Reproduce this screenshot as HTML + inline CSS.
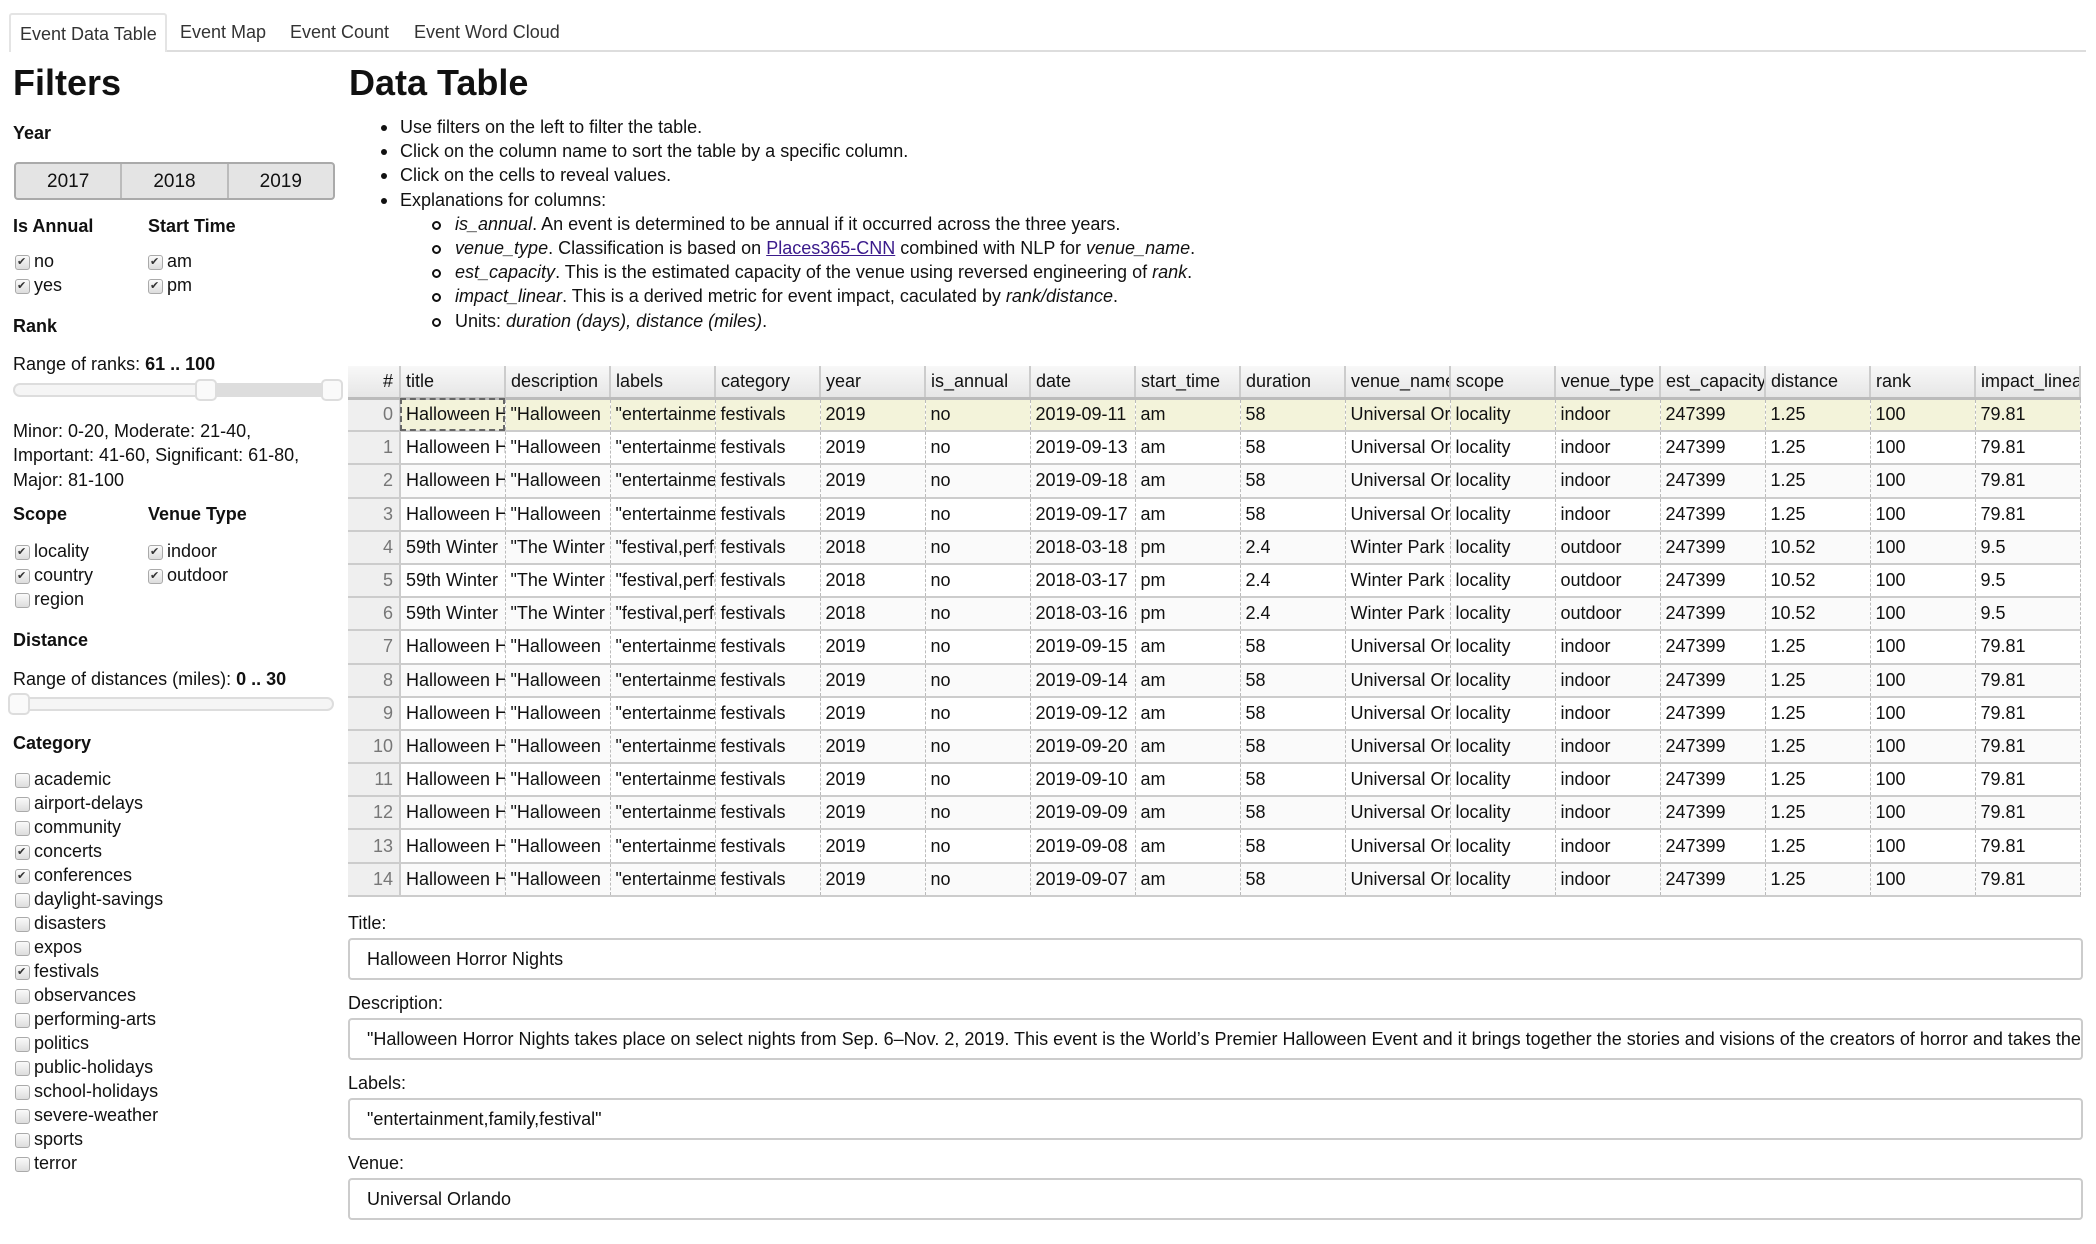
<!DOCTYPE html>
<html><head><meta charset="utf-8"><style>
*{box-sizing:border-box;margin:0;padding:0}
body{width:2096px;height:1244px;background:#fff;font-family:"Liberation Sans",sans-serif;color:#111;position:relative;overflow:hidden;font-size:18px}
.a{position:absolute;white-space:nowrap}
.tabline{position:absolute;left:9px;top:50px;width:2077px;height:2px;background:#ddd}
.tab{position:absolute;top:13px;height:38px;line-height:38px;font-size:18px;color:#333}
.act{left:9px;width:158px;border:2px solid #e4e4e4;border-bottom:none;border-radius:3px 3px 0 0;background:#fff;padding-left:9px;height:39px}
h1{position:absolute;font-size:36px;font-weight:bold;line-height:40px}
.b{font-weight:bold;font-size:18px}
.btns{position:absolute;left:14px;top:162px;width:321px;height:38px;border:2px solid #aaa;border-radius:4px;display:flex;background:#e4e4e4}
.btns div{flex:1;text-align:center;line-height:36px;font-size:19px;border-right:2px solid #bbb}
.btns div:last-child{border-right:none}
.cb{position:absolute;font-size:18px;line-height:22px;white-space:nowrap;padding-left:19px}
.cb:before{content:"";position:absolute;left:0;top:5px;width:13px;height:13px;border:1px solid #aaa;border-radius:3px;background:linear-gradient(#fafafa,#ddd)}
.cb.c:after{content:"✔";position:absolute;left:2px;top:1px;font-size:11px;color:#333}
.track{position:absolute;height:14px;border:2px solid #ddd;border-radius:7px;background:#f5f5f5}
.hnd{position:absolute;width:22px;height:22px;border:2px solid #ddd;border-radius:5px;background:#fafafa}
ul{position:absolute;left:381px;top:115px;list-style:none;font-size:18px;line-height:24.2px}
li{position:relative;padding-left:19px}
li.m:before{content:"";position:absolute;left:0;top:10px;width:6px;height:6px;border-radius:50%;background:#111}
li.s{padding-left:74px}
li.s:before{content:"";position:absolute;left:51px;top:9px;width:5px;height:5px;border-radius:50%;border:2px solid #111}
a{color:#3a1a8b;text-decoration:underline}
table{position:absolute;left:348px;top:366px;border-collapse:collapse;table-layout:fixed;width:1732px;font-size:18px}
th{height:32px;font-weight:normal;text-align:left;padding-left:5px;background:linear-gradient(#f8f8f8,#e6e6e6);border-right:2px solid #ccc;border-bottom:3px solid #bbb;overflow:hidden;white-space:nowrap}
td{height:33.2px;padding-left:5px;border-right:1px dashed #bbb;border-bottom:2px solid #ccc;overflow:hidden;white-space:nowrap}
td:first-child,th:first-child{text-align:right;padding-right:6px;color:#777;background:#efefef;border-right:2px solid #ccc}
th:first-child{color:#111;background:linear-gradient(#f8f8f8,#e6e6e6)}
tr:nth-child(even) td{background:#fafafa}
tr:nth-child(even) td:first-child{background:#efefef}
table tr.h td{background:#f3f3da}
table tr.h td:first-child{background:#efefef}
tr.h td.sel{outline:2px dashed #666;outline-offset:-2px}
.lab{position:absolute;left:348px;font-size:18px}
.box{position:absolute;left:348px;width:1735px;height:42px;border:2px solid #ccc;border-radius:4px;padding-left:17px;line-height:38px;font-size:18px;white-space:nowrap;overflow:hidden}
</style></head><body>
<div class="tabline"></div>
<div class="tab act">Event Data Table</div>
<div class="tab" style="left:180px">Event Map</div>
<div class="tab" style="left:290px">Event Count</div>
<div class="tab" style="left:414px">Event Word Cloud</div>

<h1 style="left:13px;top:63px">Filters</h1>
<h1 style="left:349px;top:63px">Data Table</h1>

<div class="a b" style="left:13px;top:123px">Year</div>
<div class="btns"><div>2017</div><div>2018</div><div>2019</div></div>
<div class="a b" style="left:13px;top:216px">Is Annual</div>
<div class="a b" style="left:148px;top:216px">Start Time</div>
<div class="cb c" style="left:15px;top:250px">no</div>
<div class="cb c" style="left:15px;top:274px">yes</div>
<div class="cb c" style="left:148px;top:250px">am</div>
<div class="cb c" style="left:148px;top:274px">pm</div>
<div class="a b" style="left:13px;top:316px">Rank</div>
<div class="a" style="left:13px;top:354px">Range of ranks: <b>61 .. 100</b></div>
<div class="track" style="left:13px;top:383px;width:323px"></div>
<div class="track" style="left:205px;top:383px;width:130px;background:#ddd"></div>
<div class="hnd" style="left:195px;top:379px"></div>
<div class="hnd" style="left:321px;top:379px"></div>
<div class="a" style="left:13px;top:419px;line-height:24.3px">Minor: 0-20, Moderate: 21-40,<br>Important: 41-60, Significant: 61-80,<br>Major: 81-100</div>
<div class="a b" style="left:13px;top:504px">Scope</div>
<div class="a b" style="left:148px;top:504px">Venue Type</div>
<div class="cb c" style="left:15px;top:540px">locality</div>
<div class="cb c" style="left:15px;top:564px">country</div>
<div class="cb" style="left:15px;top:588px">region</div>
<div class="cb c" style="left:148px;top:540px">indoor</div>
<div class="cb c" style="left:148px;top:564px">outdoor</div>
<div class="a b" style="left:13px;top:630px">Distance</div>
<div class="a" style="left:13px;top:669px">Range of distances (miles): <b>0 .. 30</b></div>
<div class="track" style="left:13px;top:697px;width:321px"></div>
<div class="hnd" style="left:8px;top:693px"></div>
<div class="a b" style="left:13px;top:733px">Category</div>
<div class="cb" style="left:15px;top:768px">academic</div>
<div class="cb" style="left:15px;top:792px">airport-delays</div>
<div class="cb" style="left:15px;top:816px">community</div>
<div class="cb c" style="left:15px;top:840px">concerts</div>
<div class="cb c" style="left:15px;top:864px">conferences</div>
<div class="cb" style="left:15px;top:888px">daylight-savings</div>
<div class="cb" style="left:15px;top:912px">disasters</div>
<div class="cb" style="left:15px;top:936px">expos</div>
<div class="cb c" style="left:15px;top:960px">festivals</div>
<div class="cb" style="left:15px;top:984px">observances</div>
<div class="cb" style="left:15px;top:1008px">performing-arts</div>
<div class="cb" style="left:15px;top:1032px">politics</div>
<div class="cb" style="left:15px;top:1056px">public-holidays</div>
<div class="cb" style="left:15px;top:1080px">school-holidays</div>
<div class="cb" style="left:15px;top:1104px">severe-weather</div>
<div class="cb" style="left:15px;top:1128px">sports</div>
<div class="cb" style="left:15px;top:1152px">terror</div>

<ul>
<li class="m">Use filters on the left to filter the table.</li>
<li class="m">Click on the column name to sort the table by a specific column.</li>
<li class="m">Click on the cells to reveal values.</li>
<li class="m">Explanations for columns:</li>
<li class="s"><i>is_annual</i>. An event is determined to be annual if it occurred across the three years.</li>
<li class="s"><i>venue_type</i>. Classification is based on <a>Places365-CNN</a> combined with NLP for <i>venue_name</i>.</li>
<li class="s"><i>est_capacity</i>. This is the estimated capacity of the venue using reversed engineering of <i>rank</i>.</li>
<li class="s"><i>impact_linear</i>. This is a derived metric for event impact, caculated by <i>rank/distance</i>.</li>
<li class="s">Units: <i>duration (days), distance (miles)</i>.</li>
</ul>

<table>
<colgroup><col style="width:52px"><col span="16" style="width:105px"></colgroup>
<tr><th>#</th><th>title</th><th>description</th><th>labels</th><th>category</th><th>year</th><th>is_annual</th><th>date</th><th>start_time</th><th>duration</th><th>venue_name</th><th>scope</th><th>venue_type</th><th>est_capacity</th><th>distance</th><th>rank</th><th>impact_linear</th></tr>
<tr class="h"><td>0</td><td class="sel">Halloween Horror</td><td>"Halloween</td><td>"entertainment</td><td>festivals</td><td>2019</td><td>no</td><td>2019-09-11</td><td>am</td><td>58</td><td>Universal Orlando</td><td>locality</td><td>indoor</td><td>247399</td><td>1.25</td><td>100</td><td>79.81</td></tr>
<tr><td>1</td><td>Halloween Horror</td><td>"Halloween</td><td>"entertainment</td><td>festivals</td><td>2019</td><td>no</td><td>2019-09-13</td><td>am</td><td>58</td><td>Universal Orlando</td><td>locality</td><td>indoor</td><td>247399</td><td>1.25</td><td>100</td><td>79.81</td></tr>
<tr><td>2</td><td>Halloween Horror</td><td>"Halloween</td><td>"entertainment</td><td>festivals</td><td>2019</td><td>no</td><td>2019-09-18</td><td>am</td><td>58</td><td>Universal Orlando</td><td>locality</td><td>indoor</td><td>247399</td><td>1.25</td><td>100</td><td>79.81</td></tr>
<tr><td>3</td><td>Halloween Horror</td><td>"Halloween</td><td>"entertainment</td><td>festivals</td><td>2019</td><td>no</td><td>2019-09-17</td><td>am</td><td>58</td><td>Universal Orlando</td><td>locality</td><td>indoor</td><td>247399</td><td>1.25</td><td>100</td><td>79.81</td></tr>
<tr><td>4</td><td>59th Winter</td><td>"The Winter</td><td>"festival,performing</td><td>festivals</td><td>2018</td><td>no</td><td>2018-03-18</td><td>pm</td><td>2.4</td><td>Winter Park</td><td>locality</td><td>outdoor</td><td>247399</td><td>10.52</td><td>100</td><td>9.5</td></tr>
<tr><td>5</td><td>59th Winter</td><td>"The Winter</td><td>"festival,performing</td><td>festivals</td><td>2018</td><td>no</td><td>2018-03-17</td><td>pm</td><td>2.4</td><td>Winter Park</td><td>locality</td><td>outdoor</td><td>247399</td><td>10.52</td><td>100</td><td>9.5</td></tr>
<tr><td>6</td><td>59th Winter</td><td>"The Winter</td><td>"festival,performing</td><td>festivals</td><td>2018</td><td>no</td><td>2018-03-16</td><td>pm</td><td>2.4</td><td>Winter Park</td><td>locality</td><td>outdoor</td><td>247399</td><td>10.52</td><td>100</td><td>9.5</td></tr>
<tr><td>7</td><td>Halloween Horror</td><td>"Halloween</td><td>"entertainment</td><td>festivals</td><td>2019</td><td>no</td><td>2019-09-15</td><td>am</td><td>58</td><td>Universal Orlando</td><td>locality</td><td>indoor</td><td>247399</td><td>1.25</td><td>100</td><td>79.81</td></tr>
<tr><td>8</td><td>Halloween Horror</td><td>"Halloween</td><td>"entertainment</td><td>festivals</td><td>2019</td><td>no</td><td>2019-09-14</td><td>am</td><td>58</td><td>Universal Orlando</td><td>locality</td><td>indoor</td><td>247399</td><td>1.25</td><td>100</td><td>79.81</td></tr>
<tr><td>9</td><td>Halloween Horror</td><td>"Halloween</td><td>"entertainment</td><td>festivals</td><td>2019</td><td>no</td><td>2019-09-12</td><td>am</td><td>58</td><td>Universal Orlando</td><td>locality</td><td>indoor</td><td>247399</td><td>1.25</td><td>100</td><td>79.81</td></tr>
<tr><td>10</td><td>Halloween Horror</td><td>"Halloween</td><td>"entertainment</td><td>festivals</td><td>2019</td><td>no</td><td>2019-09-20</td><td>am</td><td>58</td><td>Universal Orlando</td><td>locality</td><td>indoor</td><td>247399</td><td>1.25</td><td>100</td><td>79.81</td></tr>
<tr><td>11</td><td>Halloween Horror</td><td>"Halloween</td><td>"entertainment</td><td>festivals</td><td>2019</td><td>no</td><td>2019-09-10</td><td>am</td><td>58</td><td>Universal Orlando</td><td>locality</td><td>indoor</td><td>247399</td><td>1.25</td><td>100</td><td>79.81</td></tr>
<tr><td>12</td><td>Halloween Horror</td><td>"Halloween</td><td>"entertainment</td><td>festivals</td><td>2019</td><td>no</td><td>2019-09-09</td><td>am</td><td>58</td><td>Universal Orlando</td><td>locality</td><td>indoor</td><td>247399</td><td>1.25</td><td>100</td><td>79.81</td></tr>
<tr><td>13</td><td>Halloween Horror</td><td>"Halloween</td><td>"entertainment</td><td>festivals</td><td>2019</td><td>no</td><td>2019-09-08</td><td>am</td><td>58</td><td>Universal Orlando</td><td>locality</td><td>indoor</td><td>247399</td><td>1.25</td><td>100</td><td>79.81</td></tr>
<tr><td>14</td><td>Halloween Horror</td><td>"Halloween</td><td>"entertainment</td><td>festivals</td><td>2019</td><td>no</td><td>2019-09-07</td><td>am</td><td>58</td><td>Universal Orlando</td><td>locality</td><td>indoor</td><td>247399</td><td>1.25</td><td>100</td><td>79.81</td></tr>
</table>

<div class="lab" style="top:913px">Title:</div>
<div class="box" style="top:938px">Halloween Horror Nights</div>
<div class="lab" style="top:993px">Description:</div>
<div class="box" style="top:1018px">"Halloween Horror Nights takes place on select nights from Sep. 6–Nov. 2, 2019. This event is the World’s Premier Halloween Event and it brings together the stories and visions of the creators of horror and takes their</div>
<div class="lab" style="top:1073px">Labels:</div>
<div class="box" style="top:1098px">"entertainment,family,festival"</div>
<div class="lab" style="top:1153px">Venue:</div>
<div class="box" style="top:1178px">Universal Orlando</div>
</body></html>
